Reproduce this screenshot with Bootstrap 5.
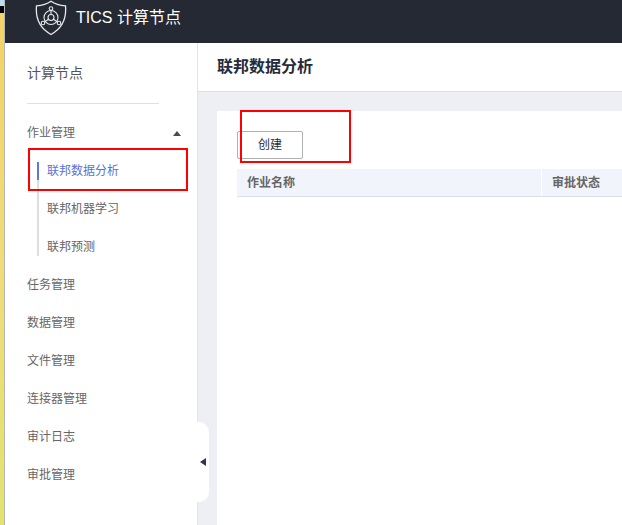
<!DOCTYPE html>
<html lang="zh">
<head>
<meta charset="utf-8">
<title>TICS</title>
<link href="https://cdn.jsdelivr.net/npm/bootstrap@5.3.0/dist/css/bootstrap.min.css" rel="stylesheet">
<style>
html,body{height:100%;}
body{font-family:"Liberation Sans","Noto Sans CJK SC",sans-serif;background:#eeeff4;overflow:hidden;width:622px;height:525px;}
.shell{height:525px;overflow:hidden;}
.edgebar{width:5px;flex:none;background:linear-gradient(#f5d263,#f0dc78 50%,#e2e46c);border-right:1px solid #b4b6b8;}
.edgesky{height:6px;background:#bcdcf2;}
.edgetop{height:7px;background:#000;}
.framecol{flex:1;min-width:0;min-height:0;}
.topbar{height:43px;flex:none;background:#252933;color:#fff;padding-left:30px;padding-bottom:8px;}
.topbar svg{width:32px;height:36px;flex:none;}
.brand{font-size:16px;margin-left:9px;line-height:1;}
.body-row{min-height:0;}
.side{width:193px;flex:none;background:#fff;position:relative;border-right:1px solid #e4e5ea;}
.sidetitle{font-size:14px;color:#555;padding:23px 0 0 22px;height:60px;line-height:14px;}
.siderule{height:1px;background:#dfe0e4;margin:0 38px 0 22px;}
.menu{font-size:12px;color:#666;padding-top:10px;}
.mi{height:38px;padding-left:22px;display:flex;align-items:center;}
.caret-up{margin-left:auto;margin-right:16px;width:0;height:0;border-left:4.5px solid transparent;border-right:4.5px solid transparent;border-bottom:5px solid #444b59;}
.subs{position:relative;}
.subs::before{content:"";position:absolute;left:32px;top:10px;width:2px;height:94px;background:#dcdde5;}
.subs::after{content:"";position:absolute;left:32px;top:10px;width:2px;height:18px;background:#5b78dc;}
.si{height:38px;padding-left:42px;display:flex;align-items:center;color:#666;}
.si.on{color:#5673d8;}
.collapser{position:absolute;left:192px;top:379px;width:12px;height:80px;background:#fff;border-radius:0 10px 10px 0;display:flex;align-items:center;justify-content:center;z-index:2;}
.tri-left{width:0;height:0;border-top:4.5px solid transparent;border-bottom:4.5px solid transparent;border-right:6px solid #2c3550;margin-right:1px;}
.mainarea{flex:1;min-width:0;background:#eeeff4;}
.pagehead{height:49px;background:#fff;border-bottom:1px solid #dfe0e5;padding-left:19px;font-size:16px;font-weight:700;color:#252b3a;}
.panel{background:#fff;margin:19px 0 0 19px;height:420px;padding:20px 0 0 20px;}
.createbtn{width:66px;height:28px;border:1px solid #adb0b8;border-radius:2px;font-size:12px;color:#252b3a;background:#fff;padding:0;display:block;margin-bottom:10px;}
.thead-row{height:28px;background:#f1f4fb;border-bottom:1px solid #dfe1e9;font-size:12px;font-weight:700;color:#666;}
.c1{width:305px;padding-left:10px;border-right:1px solid #fff;height:100%;}
.c2{padding-left:10px;}
.redbox{position:absolute;border:2px solid #f00;pointer-events:none;z-index:3;}
.rb1{left:28px;top:148px;width:160px;height:43px;}
.rb2{left:240px;top:110px;width:111px;height:53px;}
</style>
</head>
<body>
<div class="d-flex shell position-relative">
  <div class="edgebar"><div class="edgesky"></div><div class="edgetop"></div></div>
  <div class="framecol d-flex flex-column">
    <div class="topbar d-flex align-items-center">
      <svg viewBox="0 0 32 36" fill="none" stroke="#e8e9ec" stroke-width="1.1">
        <path d="M16 1.2 C20 4 25 5.4 30.500 5.800 C31.500 17 28 28 16 34.500 C4 28 .5 17 1.500 5.800 C7 5.400 12 4 16 1.200Z" stroke-width="1.300"/>
        <circle cx="16" cy="17.500" r="7"/>
        <circle cx="16" cy="17.500" r="3"/>
        <circle cx="16" cy="8.500" r="1.800"/>
        <circle cx="8" cy="23" r="1.800"/>
        <circle cx="24" cy="23" r="1.800"/>
        <path d="M16 10.300V14.500M9.500 22 13.500 19.200M22.500 22 18.500 19.200"/>
      </svg>
      <span class="brand">TICS 计算节点</span>
    </div>
    <div class="d-flex flex-grow-1 body-row">
      <div class="side">
        <div class="sidetitle">计算节点</div>
        <div class="siderule"></div>
        <div class="menu">
          <div class="mi">作业管理<span class="caret-up"></span></div>
          <div class="subs">
            <div class="si on">联邦数据分析</div>
            <div class="si">联邦机器学习</div>
            <div class="si">联邦预测</div>
          </div>
          <div class="mi">任务管理</div>
          <div class="mi">数据管理</div>
          <div class="mi">文件管理</div>
          <div class="mi">连接器管理</div>
          <div class="mi">审计日志</div>
          <div class="mi">审批管理</div>
        </div>
        <div class="collapser"><span class="tri-left"></span></div>
      </div>
      <div class="mainarea">
        <div class="pagehead d-flex align-items-center">联邦数据分析</div>
        <div class="panel">
          <button type="button" class="btn createbtn">创建</button>
          <div class="thead-row d-flex align-items-center">
            <div class="c1 d-flex align-items-center">作业名称</div>
            <div class="c2">审批状态</div>
          </div>
        </div>
      </div>
    </div>
  </div>
  <div class="redbox rb1"></div>
  <div class="redbox rb2"></div>
</div>
<script src="https://cdn.jsdelivr.net/npm/bootstrap@5.3.0/dist/js/bootstrap.bundle.min.js"></script>
</body>
</html>
